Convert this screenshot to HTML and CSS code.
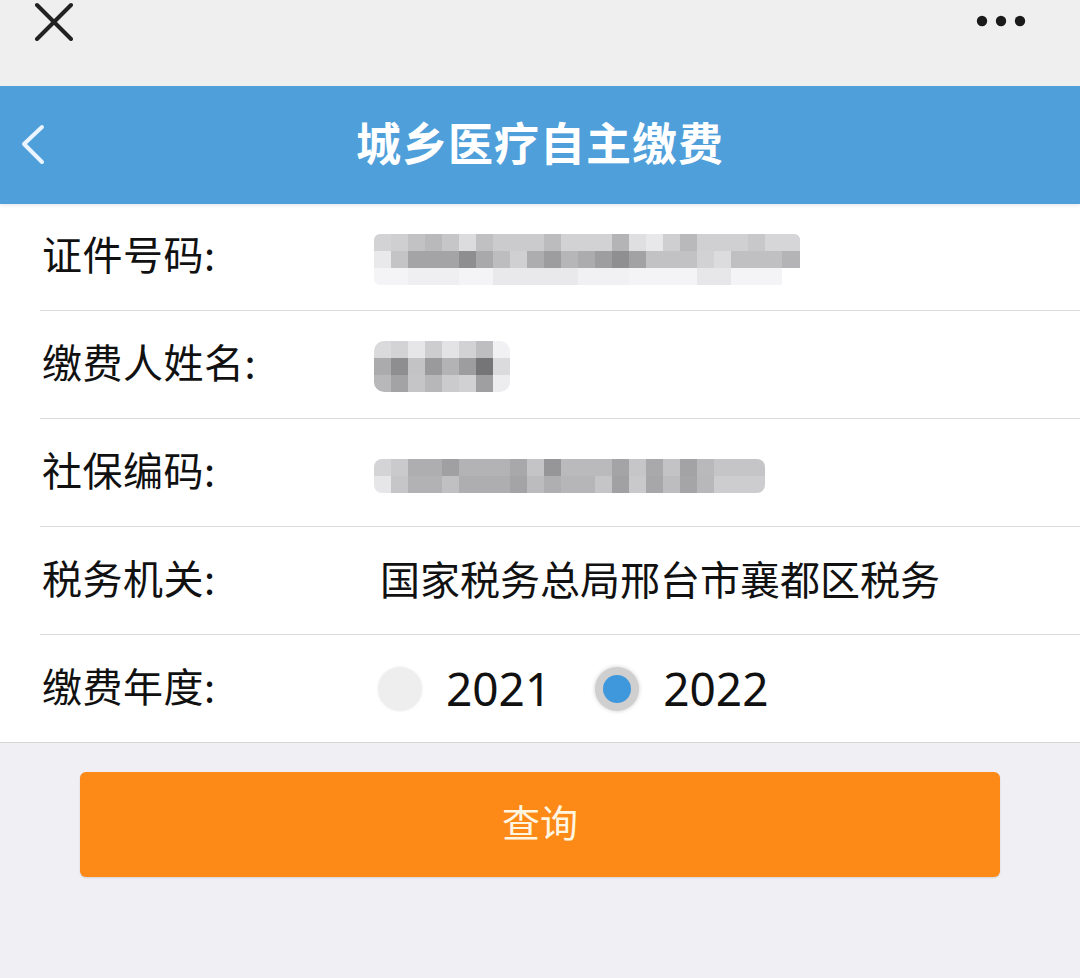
FILE: index.html
```html
<!DOCTYPE html>
<html lang="zh-CN">
<head>
<meta charset="utf-8">
<title>城乡医疗自主缴费</title>
<link rel="stylesheet" href="styles.css">
</head>
<body>
<div class="topbar">
  <svg class="close" width="40" height="40" viewBox="0 0 40 40"><path d="M3 4 L37 38 M37 4 L3 38" stroke="#222" stroke-width="4" stroke-linecap="round" fill="none"/></svg>
  <svg class="more" width="52" height="14" viewBox="0 0 52 14"><circle cx="6" cy="7" r="5.2" fill="#1a1a1a"/><circle cx="25" cy="7" r="5.2" fill="#1a1a1a"/><circle cx="44" cy="7" r="5.2" fill="#1a1a1a"/></svg>
</div>
<header class="navbar">
  <svg class="back" width="30" height="44" viewBox="0 0 30 44"><path d="M23 4 L5 21 L23 39" stroke="#eaf5ff" stroke-width="4" stroke-linecap="round" stroke-linejoin="round" fill="none"/></svg>
  <h1 class="title">城乡医疗自主缴费</h1>
</header>
<section class="form">
  <div class="row">
    <div class="label">证件号码:</div>
    <div class="value">
      <svg class="mosaic" width="426" height="51" viewBox="0 0 426 51">
        <defs><clipPath id="c1"><rect x="0" y="0" width="426" height="51" rx="6"/></clipPath></defs>
        <g clip-path="url(#c1)">
          <rect x="0" y="0" width="426" height="17" fill="#d3d3d5"/>
          <rect x="17" y="0" width="17" height="17" fill="#cfcfd1"/>
          <rect x="34" y="0" width="17" height="17" fill="#c2c2c4"/>
          <rect x="51" y="0" width="17" height="17" fill="#b9b9bb"/>
          <rect x="68" y="0" width="17" height="17" fill="#c6c6c8"/>
          <rect x="85" y="0" width="17" height="17" fill="#dcdcde"/>
          <rect x="102" y="0" width="17" height="17" fill="#c0c0c2"/>
          <rect x="119" y="0" width="51" height="17" fill="#cbcbcd"/>
          <rect x="170" y="0" width="17" height="17" fill="#bcbcbe"/>
          <rect x="187" y="0" width="51" height="17" fill="#d2d2d4"/>
          <rect x="238" y="0" width="17" height="17" fill="#b4b4b6"/>
          <rect x="255" y="0" width="17" height="17" fill="#dfdfe1"/>
          <rect x="272" y="0" width="17" height="17" fill="#e8e8ea"/>
          <rect x="289" y="0" width="17" height="17" fill="#cfcfd1"/>
          <rect x="306" y="0" width="17" height="17" fill="#b9b9bb"/>
          <rect x="323" y="0" width="51" height="17" fill="#d0d0d2"/>
          <rect x="374" y="0" width="17" height="17" fill="#c8c8ca"/>
          <rect x="391" y="0" width="35" height="17" fill="#d6d6d8"/>

          <rect x="0" y="17" width="17" height="17" fill="#e9e9eb"/>
          <rect x="17" y="17" width="17" height="17" fill="#c4c4c6"/>
          <rect x="34" y="17" width="51" height="17" fill="#a4a4a6"/>
          <rect x="85" y="17" width="17" height="17" fill="#8e8e90"/>
          <rect x="102" y="17" width="17" height="17" fill="#a9a9ab"/>
          <rect x="119" y="17" width="17" height="17" fill="#bdbdbf"/>
          <rect x="136" y="17" width="17" height="17" fill="#d0d0d2"/>
          <rect x="153" y="17" width="17" height="17" fill="#adadaf"/>
          <rect x="170" y="17" width="17" height="17" fill="#9d9d9f"/>
          <rect x="187" y="17" width="17" height="17" fill="#b6b6b8"/>
          <rect x="204" y="17" width="17" height="17" fill="#acacae"/>
          <rect x="221" y="17" width="17" height="17" fill="#9e9ea0"/>
          <rect x="238" y="17" width="17" height="17" fill="#8f8f91"/>
          <rect x="255" y="17" width="17" height="17" fill="#a2a2a4"/>
          <rect x="272" y="17" width="51" height="17" fill="#c2c2c4"/>
          <rect x="323" y="17" width="17" height="17" fill="#d2d2d4"/>
          <rect x="340" y="17" width="17" height="17" fill="#dcdcde"/>
          <rect x="357" y="17" width="51" height="17" fill="#c0c0c2"/>
          <rect x="408" y="17" width="18" height="17" fill="#b4b4b6"/>

          <rect x="0" y="34" width="426" height="17" fill="#f4f4f6"/>
          <rect x="34" y="34" width="51" height="17" fill="#efeff1"/>
          <rect x="119" y="34" width="85" height="17" fill="#e9e9eb"/>
          <rect x="204" y="34" width="51" height="17" fill="#f1f1f3"/>
          <rect x="323" y="34" width="34" height="17" fill="#e7e7e9"/>
          <rect x="408" y="34" width="18" height="17" fill="#ffffff"/>
        </g>
      </svg>
    </div>
  </div>
  <div class="row">
    <div class="label">缴费人姓名:</div>
    <div class="value">
      <svg class="mosaic" width="136" height="51" viewBox="0 0 136 51">
        <defs><clipPath id="c2"><rect x="0" y="0" width="136" height="51" rx="10"/></clipPath></defs>
        <g clip-path="url(#c2)">
          <rect x="0" y="0" width="17" height="17" fill="#dadadc"/>
          <rect x="17" y="0" width="17" height="17" fill="#d3d3d5"/>
          <rect x="34" y="0" width="17" height="17" fill="#e6e6e8"/>
          <rect x="51" y="0" width="17" height="17" fill="#cdcdcf"/>
          <rect x="68" y="0" width="17" height="17" fill="#e3e3e5"/>
          <rect x="85" y="0" width="17" height="17" fill="#d2d2d4"/>
          <rect x="102" y="0" width="17" height="17" fill="#bebec0"/>
          <rect x="119" y="0" width="17" height="17" fill="#f1f1f3"/>
          <rect x="0" y="17" width="17" height="17" fill="#ababad"/>
          <rect x="17" y="17" width="17" height="17" fill="#8e8e90"/>
          <rect x="34" y="17" width="17" height="17" fill="#c3c3c5"/>
          <rect x="51" y="17" width="17" height="17" fill="#9a9a9c"/>
          <rect x="68" y="17" width="17" height="17" fill="#b3b3b5"/>
          <rect x="85" y="17" width="17" height="17" fill="#9d9d9f"/>
          <rect x="102" y="17" width="17" height="17" fill="#757577"/>
          <rect x="119" y="17" width="17" height="17" fill="#dbdbdd"/>
          <rect x="0" y="34" width="17" height="17" fill="#b8b8ba"/>
          <rect x="17" y="34" width="17" height="17" fill="#a3a3a5"/>
          <rect x="34" y="34" width="17" height="17" fill="#c5c5c7"/>
          <rect x="51" y="34" width="17" height="17" fill="#b7b7b9"/>
          <rect x="68" y="34" width="17" height="17" fill="#cbcbcd"/>
          <rect x="85" y="34" width="17" height="17" fill="#d1d1d3"/>
          <rect x="102" y="34" width="17" height="17" fill="#9f9fa1"/>
          <rect x="119" y="34" width="17" height="17" fill="#ededef"/>
        </g>
      </svg>
    </div>
  </div>
  <div class="row">
    <div class="label">社保编码:</div>
    <div class="value">
      <svg class="mosaic" width="391" height="34" viewBox="0 0 391 34">
        <defs><clipPath id="c3"><rect x="0" y="0" width="391" height="34" rx="8"/></clipPath></defs>
        <g clip-path="url(#c3)">
          <rect x="0" y="0" width="17" height="17" fill="#d4d4d6"/>
          <rect x="17" y="0" width="17" height="17" fill="#cacacc"/>
          <rect x="34" y="0" width="34" height="17" fill="#aeaeb0"/>
          <rect x="68" y="0" width="17" height="17" fill="#a0a0a2"/>
          <rect x="85" y="0" width="51" height="17" fill="#b3b3b5"/>
          <rect x="136" y="0" width="17" height="17" fill="#a8a8aa"/>
          <rect x="153" y="0" width="17" height="17" fill="#c4c4c6"/>
          <rect x="170" y="0" width="17" height="17" fill="#969698"/>
          <rect x="187" y="0" width="51" height="17" fill="#bababc"/>
          <rect x="238" y="0" width="17" height="17" fill="#a4a4a6"/>
          <rect x="255" y="0" width="17" height="17" fill="#c6c6c8"/>
          <rect x="272" y="0" width="17" height="17" fill="#a9a9ab"/>
          <rect x="289" y="0" width="17" height="17" fill="#c3c3c5"/>
          <rect x="306" y="0" width="17" height="17" fill="#a3a3a5"/>
          <rect x="323" y="0" width="17" height="17" fill="#b9b9bb"/>
          <rect x="340" y="0" width="51" height="17" fill="#c5c5c7"/>
          <rect x="0" y="17" width="17" height="17" fill="#e6e6e8"/>
          <rect x="17" y="17" width="17" height="17" fill="#c6c6c8"/>
          <rect x="34" y="17" width="34" height="17" fill="#b2b2b4"/>
          <rect x="68" y="17" width="17" height="17" fill="#c0c0c2"/>
          <rect x="85" y="17" width="51" height="17" fill="#aeaeb0"/>
          <rect x="136" y="17" width="17" height="17" fill="#a4a4a6"/>
          <rect x="153" y="17" width="17" height="17" fill="#bcbcbe"/>
          <rect x="170" y="17" width="17" height="17" fill="#afafb1"/>
          <rect x="187" y="17" width="34" height="17" fill="#b6b6b8"/>
          <rect x="221" y="17" width="17" height="17" fill="#c5c5c7"/>
          <rect x="238" y="17" width="17" height="17" fill="#a1a1a3"/>
          <rect x="255" y="17" width="17" height="17" fill="#c9c9cb"/>
          <rect x="272" y="17" width="17" height="17" fill="#a7a7a9"/>
          <rect x="289" y="17" width="17" height="17" fill="#bdbdbf"/>
          <rect x="306" y="17" width="17" height="17" fill="#a5a5a7"/>
          <rect x="323" y="17" width="17" height="17" fill="#b8b8ba"/>
          <rect x="340" y="17" width="51" height="17" fill="#cdcdcf"/>
        </g>
      </svg>
    </div>
  </div>
  <div class="row">
    <div class="label">税务机关:</div>
    <div class="value text">国家税务总局邢台市襄都区税务</div>
  </div>
  <div class="row">
    <div class="label">缴费年度:</div>
    <div class="value years">
      <label class="opt"><span class="radio"></span><span class="year">2021</span></label>
      <label class="opt"><span class="radio checked"></span><span class="year">2022</span></label>
    </div>
  </div>
</section>
<div class="actions">
  <button class="query" type="button">查询</button>
</div>
</body>
</html>
```
FILE: styles.css
```css
* { box-sizing: border-box; }
html, body { margin: 0; padding: 0; }
body {
  width: 1080px;
  height: 978px;
  overflow: hidden;
  background: #f0eff4;
  font-family: "Noto Sans CJK SC", "Noto Sans", sans-serif;
  color: #111;
}
.topbar {
  height: 86px;
  background: #efefef;
  display: flex;
  justify-content: space-between;
  align-items: flex-start;
  padding: 0 0 0 34px;
}
.close { margin-top: 1px; }
.more { margin-top: 14px; margin-right: 52px; }
.navbar {
  height: 118px;
  background: #4f9fda;
  display: flex;
  align-items: center;
  justify-content: center;
  position: relative;
  box-shadow: 0 2px 3px rgba(0,0,0,0.08);
}
.back {
  position: absolute;
  left: 19px;
  top: 37px;
}
.title {
  margin: 0;
  color: #ffffff;
  font-size: 45px;
  font-weight: 700;
  letter-spacing: 1px;
  line-height: 1;
  margin-top: -8px;
}
.form {
  background: #fff;
  border-bottom: 1px solid #d6d6d6;
}
.row {
  height: 108px;
  display: flex;
  align-items: center;
  margin-left: 40px;
  border-bottom: 1px solid #dadada;
}
.row:first-child { height: 107px; }
.row:last-child { border-bottom: none; height: 107px; }
.label {
  width: 334px;
  padding-left: 2px;
  font-size: 40px;
  line-height: 1;
  color: #111;
  letter-spacing: 0.5px;
  margin-top: -8px;
}
.value { display: flex; align-items: center; }
.mosaic { display: block; }
.row:nth-child(1) .mosaic { margin-top: 4px; }
.row:nth-child(2) .mosaic { margin-top: 4px; }
.row:nth-child(3) .mosaic { margin-top: 6px; }
.text {
  font-size: 40px;
  line-height: 1;
  padding-left: 6px;
  color: #111;
  margin-top: -6px;
}
.years { gap: 0; margin-top: 0; }
.opt { display: flex; align-items: center; }
.opt + .opt { margin-left: 40px; }
.radio {
  width: 44px;
  height: 44px;
  border-radius: 50%;
  background: #eeeeee;
  box-shadow: 0 0 3px rgba(0,0,0,0.08);
  margin-left: 4px;
  position: relative;
}
.radio.checked {
  background: #cfcfcf;
  box-shadow: 0 0 4px rgba(0,0,0,0.2);
}
.radio.checked::after {
  content: "";
  position: absolute;
  left: 8px;
  top: 8px;
  width: 28px;
  height: 28px;
  border-radius: 50%;
  background: #3f98dc;
}
.year {
  font-family: "Noto Sans", "Noto Sans CJK SC", sans-serif;
  font-size: 46px;
  line-height: 1;
  margin-left: 24px;
  color: #111;
  margin-top: -2px;
}
.actions {
  padding: 29px 80px 0 80px;
}
.query {
  width: 920px;
  height: 105px;
  border: none;
  border-radius: 6px;
  background: #fd8916;
  color: #fff6e2;
  font-family: "Noto Sans CJK SC", sans-serif;
  font-size: 38px;
  box-shadow: 0 1px 2px rgba(0,0,0,0.12);
  padding: 0 0 8px 0;
}
```
